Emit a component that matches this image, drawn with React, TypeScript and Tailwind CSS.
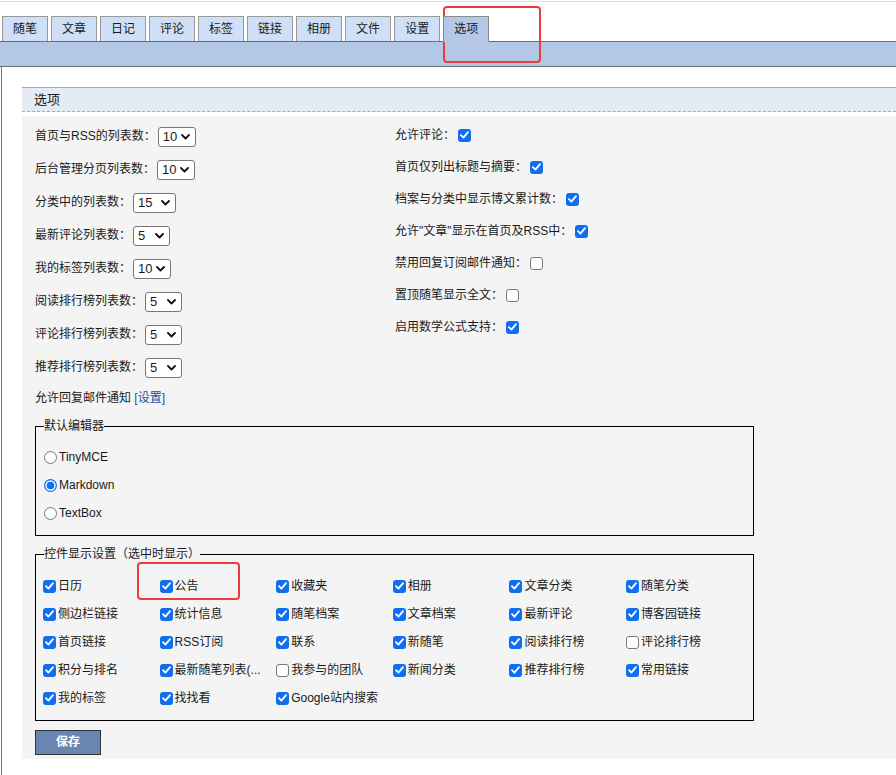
import React from "react";

const TABS = ["随笔", "文章", "日记", "评论", "标签", "链接", "相册", "文件", "设置", "选项"];
const ACTIVE_TAB = "选项";

const COUNT_ROWS = [
  { label: "首页与RSS的列表数：", value: "10", w: "w-[38px]" },
  { label: "后台管理分页列表数：", value: "10", w: "w-[38px]" },
  { label: "分类中的列表数：", value: "15", w: "w-[43px]" },
  { label: "最新评论列表数：", value: "5", w: "w-[37px]" },
  { label: "我的标签列表数：", value: "10", w: "w-[38px]" },
  { label: "阅读排行榜列表数：", value: "5", w: "w-[37px]" },
  { label: "评论排行榜列表数：", value: "5", w: "w-[37px]" },
  { label: "推荐排行榜列表数：", value: "5", w: "w-[37px]" },
];

const FLAG_ROWS = [
  { label: "允许评论：", on: true },
  { label: "首页仅列出标题与摘要：", on: true },
  { label: "档案与分类中显示博文累计数：", on: true },
  { label: "允许\"文章\"显示在首页及RSS中：", on: true },
  { label: "禁用回复订阅邮件通知：", on: false },
  { label: "置顶随笔显示全文：", on: false },
  { label: "启用数学公式支持：", on: true },
];

const EDITORS = [
  { label: "TinyMCE", on: false },
  { label: "Markdown", on: true },
  { label: "TextBox", on: false },
];

const WIDGETS: [string, boolean][] = [
  ["日历", true], ["公告", true], ["收藏夹", true], ["相册", true], ["文章分类", true], ["随笔分类", true],
  ["侧边栏链接", true], ["统计信息", true], ["随笔档案", true], ["文章档案", true], ["最新评论", true], ["博客园链接", true],
  ["首页链接", true], ["RSS订阅", true], ["联系", true], ["新随笔", true], ["阅读排行榜", true], ["评论排行榜", false],
  ["积分与排名", true], ["最新随笔列表(...", true], ["我参与的团队", false], ["新闻分类", true], ["推荐排行榜", true], ["常用链接", true],
  ["我的标签", true], ["找找看", true], ["Google站内搜索", true],
];

function Checkbox({ on }: { on: boolean }) {
  if (!on) {
    return <span className="inline-block h-[13px] w-[13px] shrink-0 rounded-[3px] border border-[#7a7a7a] bg-white" />;
  }
  return (
    <span className="inline-flex h-[13px] w-[13px] shrink-0 items-center justify-center rounded-[3px] bg-[#0f6ff0]">
      <svg width="9" height="8" viewBox="0 0 9 8" fill="none">
        <path d="M1 4.2 3.4 6.6 8 1.2" stroke="white" strokeWidth="1.8" strokeLinecap="round" strokeLinejoin="round" />
      </svg>
    </span>
  );
}

function Radio({ on }: { on: boolean }) {
  if (!on) {
    return <span className="inline-block h-[13px] w-[13px] shrink-0 rounded-full border border-[#7a7a7a] bg-white" />;
  }
  return (
    <svg width="13" height="13" viewBox="0 0 13 13" className="shrink-0">
      <circle cx="6.5" cy="6.5" r="6.5" fill="#0f6ff0" />
      <circle cx="6.5" cy="6.5" r="5.2" fill="white" />
      <circle cx="6.5" cy="6.5" r="3.8" fill="#0f6ff0" />
    </svg>
  );
}

function FakeSelect({ value, w }: { value: string; w: string }) {
  return (
    <span className={`ml-[2px] inline-flex h-[20px] items-center justify-between rounded-[3px] border border-[#777] bg-white pl-[4px] pr-[5px] text-[13px] ${w}`}>
      <span>{value}</span>
      <svg width="9" height="6" viewBox="0 0 9 6" fill="none">
        <path d="M1 1 4.5 4.5 8 1" stroke="#111" strokeWidth="1.8" strokeLinecap="round" strokeLinejoin="round" />
      </svg>
    </span>
  );
}

export default function App() {
  return (
    <div className="relative h-[775px] w-[896px] overflow-hidden bg-white text-[12px] leading-[17px] text-[#1a1a1a] font-['Liberation_Sans','Noto_Sans_CJK_SC',sans-serif]">
      <div className="h-[2px] border-b border-[#dddddd]" />

      {/* tab strip */}
      <div className="mt-[14px] flex items-end gap-[3px] pl-[2px]">
        {TABS.map((t) =>
          t === ACTIVE_TAB ? (
            <div
              key={t}
              className="relative z-10 -mb-px flex h-[26px] items-center border-x border-t border-[#8a8a8a] bg-[#b4c7e6] px-[10px] pb-px"
            >
              {t}
            </div>
          ) : (
            <div key={t} className="flex h-[25px] items-center border-x border-t border-[#999] bg-[#cfdff5] px-[10px]">
              {t}
            </div>
          )
        )}
      </div>
      <div className="h-[26px] border-y border-[#6e6e6e] bg-[#b4c7e6]" />

      <div className="ml-px h-full border-l border-[#777] pl-[20px] pt-[20px]">
        {/* options panel */}
        <div className="border-y border-dashed border-[#aaa] bg-[#e4ebf5] pl-[12px] text-[13px] leading-[23px] [border-top-style:solid]">
          选项
        </div>
        <div className="mt-[4px] bg-[#f4f4f4] pb-[4px] pl-[13px]">
          <div className="flex">
            <div className="w-[360px] pt-[4px]">
              {COUNT_ROWS.map((r) => (
                <div key={r.label} className="flex h-[33px] items-center">
                  <span>{r.label}</span>
                  <FakeSelect value={r.value} w={r.w} />
                </div>
              ))}
              <div className="flex h-[28px] items-center">
                允许回复邮件通知&nbsp;<a className="text-[#1f4ea3]">[设置]</a>
              </div>
            </div>
            <div className="flex-1 pt-[3px]">
              {FLAG_ROWS.map((r) => (
                <div key={r.label} className="flex h-[32px] items-center gap-[3px]">
                  <span>{r.label}</span>
                  <Checkbox on={r.on} />
                </div>
              ))}
            </div>
          </div>

          <fieldset className="mt-[6px] w-[719px] border border-black px-[8px] pb-[8px] pt-[8px]">
            <legend className="leading-[17px]">默认编辑器</legend>
            {EDITORS.map((e) => (
              <div key={e.label} className="flex h-[28px] items-center gap-[2px]">
                <Radio on={e.on} />
                <span>{e.label}</span>
              </div>
            ))}
          </fieldset>

          <fieldset className="mt-[10px] w-[719px] border border-black px-[7px] pb-[8px] pt-[9px]">
            <legend className="ml-px leading-[17px]">控件显示设置（选中时显示）</legend>
            <div className="grid grid-cols-[repeat(6,116.6px)]">
              {WIDGETS.map(([name, on]) => (
                <div key={name} className="flex h-[28px] items-center gap-[2px] whitespace-nowrap">
                  <Checkbox on={on} />
                  <span>{name}</span>
                </div>
              ))}
            </div>
          </fieldset>

          <button className="mt-[9px] h-[25px] w-[66px] border border-[#333] bg-[#6986b2] font-bold text-white">
            保存
          </button>
        </div>
      </div>

      {/* highlight marks */}
      <div className="pointer-events-none absolute left-[443px] top-[6px] h-[57px] w-[98px] rounded-[4px] border-2 border-[#ee3b3b]" />
      <div className="pointer-events-none absolute left-[137px] top-[562px] h-[38px] w-[103px] rounded-[4px] border-2 border-[#ee3b3b]" />
    </div>
  );
}
